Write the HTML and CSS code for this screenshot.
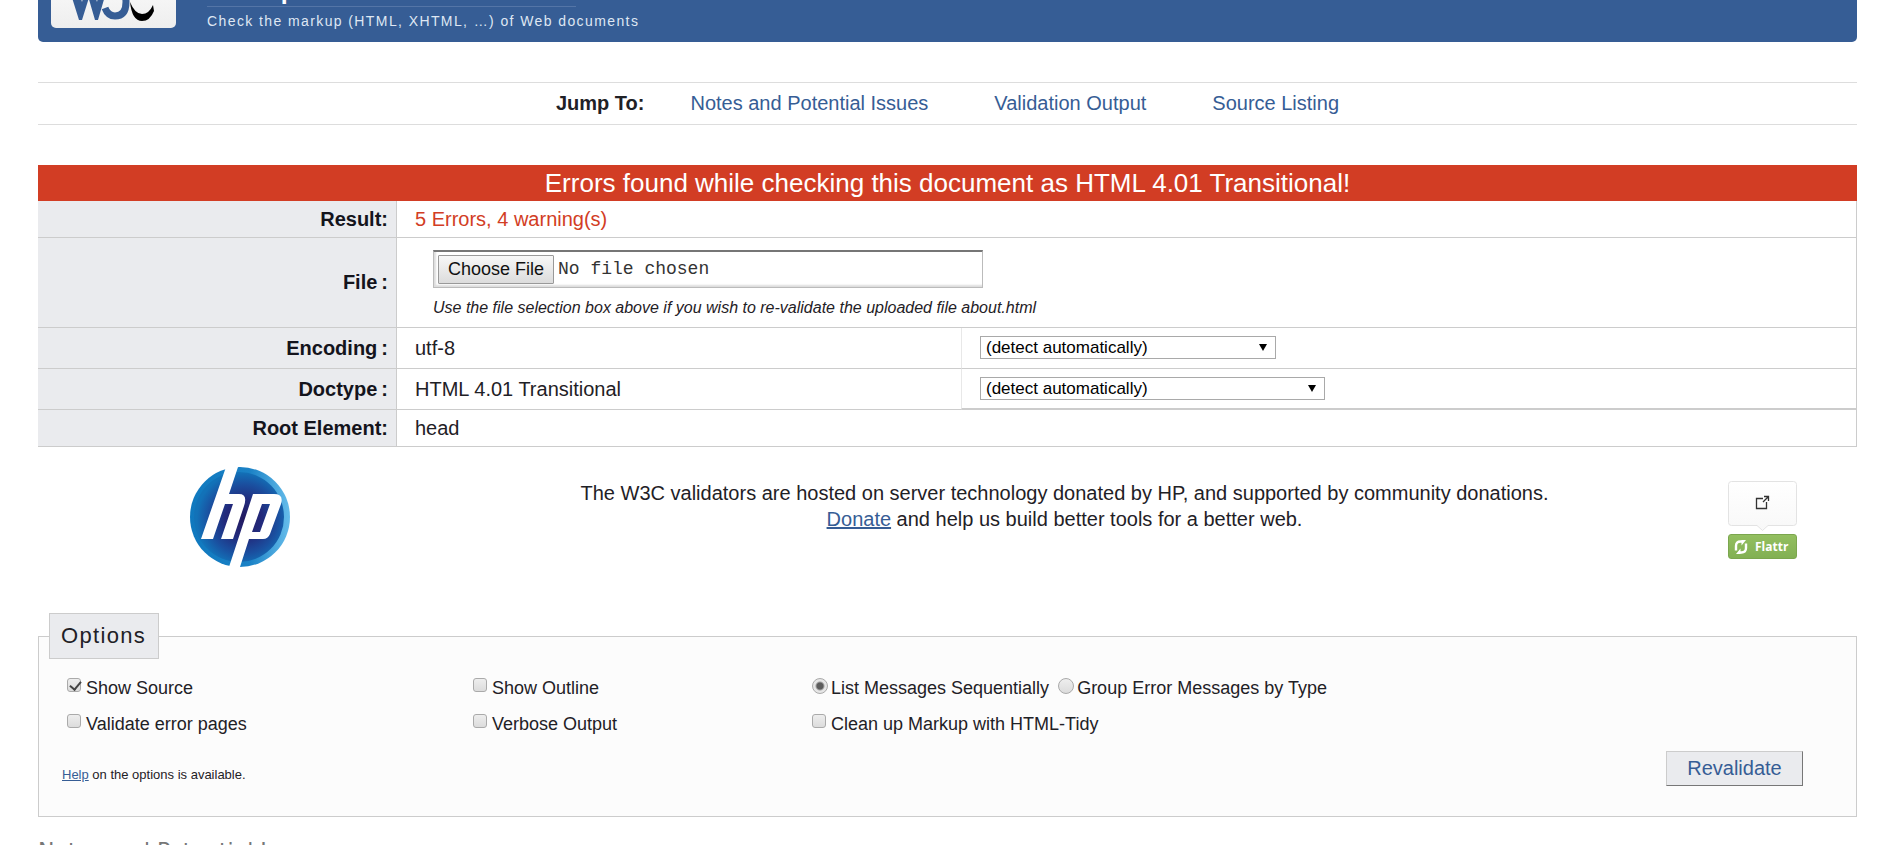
FILE: index.html
```html
<!DOCTYPE html>
<html lang="en">
<head>
<meta charset="utf-8">
<title>Markup Validation</title>
<link rel="stylesheet" href="styles.css">
</head>
<body>
<header class="banner">
  <svg class="w3c" viewBox="0 0 125 68" role="img" aria-label="W3C">
    <defs><linearGradient id="lg" x1="0" y1="0" x2="0" y2="1"><stop offset="0" stop-color="#fff"/><stop offset="1" stop-color="#eee"/></linearGradient></defs>
    <rect width="125" height="68" rx="5" fill="url(#lg)"/>
    <path d="M13 12h9l9 30 8-30h7L31 60h-3z" fill="#365d95"/>
    <path d="M30 12h7l9 30 7-30h8L47 60h-3z" fill="#365d95"/>
    <path d="M54 48q3 8 10 8 11 0 11-14 0-10-8-12l8-15H56" fill="none" stroke="#365d95" stroke-width="7"/>
    <path d="M79 42q5 12 12 12t11-9l1 6q-4 10-12 10-10 0-12-19z" fill="#000"/>
  </svg>
  <div class="brand">
    <h1>Markup Validation Service</h1>
    <p>Check the markup (HTML, XHTML, …) of Web documents</p>
  </div>
</header>
<nav class="jump">
  <strong>Jump To:</strong>
  <a href="#notes">Notes and Potential Issues</a>
  <a href="#result">Validation Output</a>
  <a href="#source">Source Listing</a>
</nav>
<form class="main">
<h2 class="invalid">Errors found while checking this document as HTML 4.01 Transitional!</h2>
<table class="results">
  <tr><th scope="row">Result:</th><td colspan="2" class="errors">5 Errors, 4 warning(s)</td></tr>
  <tr class="filerow"><th scope="row"><label for="file">File&thinsp;:</label></th><td colspan="2">
    <div class="filebox"><button type="button" id="file">Choose File</button><span>No file chosen</span></div>
    <p class="hint">Use the file selection box above if you wish to re-validate the uploaded file about.html</p></td></tr>
  <tr class="tall"><th scope="row"><label for="enc">Encoding&thinsp;:</label></th><td>utf-8</td><td class="pick"><span class="sel enc"><select id="enc"><option>(detect automatically)</option></select></span></td></tr>
  <tr class="tall"><th scope="row"><label for="doc">Doctype&thinsp;:</label></th><td>HTML 4.01 Transitional</td><td class="pick last"><span class="sel doc"><select id="doc"><option>(detect automatically)</option></select></span></td></tr>
  <tr><th scope="row">Root Element:</th><td colspan="2">head</td></tr>
</table>
<section class="donate">
  <svg class="hp" viewBox="0 0 100 100" role="img" aria-label="hp">
    <defs>
      <radialGradient id="hg" cx=".55" cy=".52" r=".52"><stop offset="0" stop-color="#231a60"/><stop offset=".4" stop-color="#222a7c"/><stop offset=".75" stop-color="#1a50a0"/><stop offset="1" stop-color="#1272b8"/></radialGradient>
      <linearGradient id="hr" x1="0" y1="0" x2="1" y2="0"><stop offset="0" stop-color="#0f78be"/><stop offset=".6" stop-color="#1b82c6"/><stop offset="1" stop-color="#66bdeb"/></linearGradient>
    </defs>
    <circle cx="50" cy="50" r="50" fill="url(#hr)"/>
    <circle cx="49" cy="50" r="45" fill="url(#hg)"/>
    <path d="M36 0 11 72h12l12-35h8L31 72h12l11-33q4-12-5-12H39L48 0z" fill="#fff"/>
    <path fill-rule="evenodd" d="M63 27h21q10 0 7 10L80 67q-2 5-7 5H59l-9 28H39zM72 37l-10 28h8l10-28z" fill="#fff"/>
  </svg>
  <p>The W3C validators are hosted on server technology donated by HP, and supported by community donations.<br><a href="#donate">Donate</a> and help us build better tools for a better web.</p>
  <a class="flattr" href="#flattr">
    <svg class="bubble" viewBox="0 0 69 50" aria-hidden="true">
      <defs><linearGradient id="bg" x1="0" y1="0" x2="0" y2="1"><stop offset="0" stop-color="#fff"/><stop offset="1" stop-color="#f8f8f8"/></linearGradient></defs>
      <path d="M3.500.5h62q3 0 3 3v38q0 3-3 3H40l-5.500 5-5.500-5H3.500q-3 0-3-3v-38q0-3 3-3z" fill="url(#bg)" stroke="#e3e3e3"/>
      <path d="M35 17.500h-6.500v10h10V21M36 15.500h4.500V20M40 16l-5 5" fill="none" stroke="#333" stroke-width="1.300"/>
    </svg>
    <span class="tag"><svg viewBox="0 0 14 14" aria-hidden="true"><path d="M2 10.500V6q0-4.500 4.500-4.500H9" fill="none" stroke="#fff" stroke-width="2.400"/><path d="M12 3.500V8q0 4.500-4.500 4.500H5" fill="none" stroke="#fff" stroke-width="2.400"/><path d="M7.500 0H12L7.500 5.500zM6.500 14H2l4.500-5.500z" fill="#fff"/></svg>Flattr</span>
  </a>
</section>
<fieldset class="options">
  <legend>Options</legend>
  <div class="grid">
    <label><input type="checkbox" checked>Show Source</label>
    <label><input type="checkbox">Show Outline</label>
    <div class="radios"><label><input type="radio" name="group" checked>List Messages Sequentially</label><label><input type="radio" name="group">Group Error Messages by Type</label></div>
    <label><input type="checkbox">Validate error pages</label>
    <label><input type="checkbox">Verbose Output</label>
    <label><input type="checkbox">Clean up Markup with HTML-Tidy</label>
  </div>
  <div class="foot"><p><a href="#help">Help</a> on the options is available.</p><button type="submit">Revalidate</button></div>
</fieldset>
</form>
<h3 class="notes" id="notes">Notes and Potential Issues</h3>
</body>
</html>
```

FILE: styles.css
```css
* { box-sizing: border-box; }
html { overflow: hidden; }
body {
  margin: 0;
  height: 100vh;
  overflow: hidden;
  padding: 0 22px 0 38px;
  background: #fff;
  color: #1f2126;
  font: 20px/26px "Liberation Sans", Arial, sans-serif;
}
a { color: #365d95; }
h1, h2, h3, p { margin: 0; font-weight: normal; }
.banner {
  display: flex;
  gap: 31px;
  height: 92px;
  margin-top: -50px;
  padding: 10px 13px 0;
  background: #365d95;
  border-radius: 0 0 5px 5px;
}
.w3c { width: 125px; height: 68px; }
.brand h1 {
  width: 369px;
  height: 47px;
  padding-top: 12px;
  border-bottom: 1px solid #5475a7;
  font-weight: bold;
  font-size: 25px;
  line-height: 36px;
  color: #fff;
  white-space: nowrap;
}
.brand p {
  font-size: 14px;
  line-height: 29px;
  letter-spacing: 0.1em;
  color: #dfe7f3;
}
.jump {
  display: flex;
  justify-content: center;
  gap: 66px;
  margin-top: 40px;
  padding: 7px 0 8px;
  border: solid #ddd;
  border-width: 1px 0;
}
.jump strong { margin-right: -20px; }
.jump a { text-decoration: none; }
.invalid {
  margin-top: 40px;
  background: #d23d24;
  color: #fff;
  text-align: center;
  font-size: 26px;
  line-height: 36px;
}
.results {
  width: 100%;
  border-collapse: separate;
  border-spacing: 0;
  border-right: 1px solid #ccc;
}
.results th, .results td {
  height: 37px;
  padding: 0 18px 1px;
  border-bottom: 1px solid #ccc;
  text-align: left;
}
.results th {
  width: 359px;
  padding-right: 8px;
  border-right: 1px solid #ccc;
  background: #eaebee;
  color: #14141c;
  text-align: right;
}
.results .errors { color: #d23d24; }
.results .tall > * { height: 41px; }
.results .filerow > * { height: 90px; }
.results .filerow td { padding: 5px 36px 0; }
.results .pick { width: 895px; border-left: 1px solid #e8e8e8; }
.results .last { border-bottom-width: 2px; }
.filebox {
  display: flex;
  align-items: center;
  gap: 4px;
  width: 550px;
  height: 38px;
  padding: 0 4px;
  border: 1px solid #bbb;
  border-top: 2px solid #767676;
  box-shadow: inset 2px -2px 2px #ddd;
  color: #333;
  font: 18px "Liberation Mono", monospace;
}
.filebox button {
  width: 116px;
  height: 29px;
  padding: 0;
  border: 1px solid #999;
  border-radius: 1px;
  background: linear-gradient(#f7f7f7, #dcdcdc);
  color: #111;
  font: 18px "Liberation Sans", Arial, sans-serif;
}
.hint {
  margin-top: 7px;
  font-size: 16px;
  line-height: 26px;
  font-style: italic;
}
.sel { position: relative; display: block; height: 23px; }
.sel::after {
  content: "";
  position: absolute;
  top: 8px;
  right: 9px;
  border: solid transparent;
  border-width: 7px 4px 0;
  border-top-color: #000;
}
.enc { width: 296px; }
.doc { width: 345px; }
.sel select {
  display: block;
  width: 100%;
  height: 100%;
  padding: 0 5px;
  border: 1px solid #a9a9a9;
  border-radius: 0;
  background: #fff;
  color: #000;
  appearance: none;
  font: 17px "Liberation Sans", Arial, sans-serif;
}
.donate {
  display: flex;
  align-items: flex-start;
  padding: 20px 60px 0 152px;
}
.hp { width: 100px; height: 100px; }
.donate p {
  flex: 1;
  padding: 13px 0 0 111px;
  text-align: center;
}
.flattr {
  display: flex;
  flex-direction: column;
  gap: 3px;
  width: 69px;
  margin-top: 14px;
  text-decoration: none;
}
.bubble { height: 50px; }
.tag {
  display: flex;
  align-items: center;
  gap: 7px;
  height: 25px;
  padding-left: 5px;
  border: 1px solid #7ba64e;
  border-radius: 3px;
  background: linear-gradient(#93bf60, #82b053);
  color: #fff;
  font: bold 12px "Open Sans", sans-serif;
}
.tag svg { width: 14px; height: 14px; }
.options {
  margin: 46px 0 0;
  padding: 0 53px 28px 23px;
  border: 1px solid #ccc;
  background: #fcfcfc;
}
.options legend {
  margin-left: -13px;
  padding: 0 12px 0 11px;
  border: 1px solid #ccc;
  background: #eaebee;
  font-size: 22px;
  line-height: 44px;
  letter-spacing: 0.06em;
}
.grid {
  display: grid;
  grid-template-columns: 406px 339px 1fr;
  padding: 11px 0 0 5px;
  font-size: 18px;
  line-height: 36px;
}
.grid label, .radios { display: flex; }
.radios { gap: 9px; }
.grid input {
  appearance: none;
  width: 14px;
  height: 14px;
  margin: 8px 5px 0 0;
  border: 1px solid #aaa;
  border-radius: 3px;
  background: linear-gradient(#eee, #dcdcdc);
}
.grid input[type="radio"] { width: 16px; height: 16px; margin-right: 3px; border-radius: 50%; }
.grid input[type="radio"]:checked { background: radial-gradient(circle, #5c5c5c 3px, #e6e6e6 5px); }
.grid input[type="checkbox"]:checked::before {
  content: "";
  display: block;
  width: 5px;
  height: 9px;
  margin: 0 0 0 4px;
  border: solid #444;
  border-width: 0 2px 2px 0;
  transform: rotate(40deg);
}
.foot {
  display: flex;
  justify-content: space-between;
  padding-top: 9px;
  font-size: 13px;
}
.foot p { padding-top: 11px; }
.foot button {
  width: 137px;
  height: 35px;
  border: 1px solid #ccc;
  border-right-color: #777;
  border-bottom-color: #777;
  background: #eaebee;
  color: #365d95;
  font: 20px "Liberation Sans", Arial, sans-serif;
}
.notes {
  margin-top: 20px;
  color: #777;
  font: 22px/28px "DejaVu Sans", Verdana, sans-serif;
}
```
